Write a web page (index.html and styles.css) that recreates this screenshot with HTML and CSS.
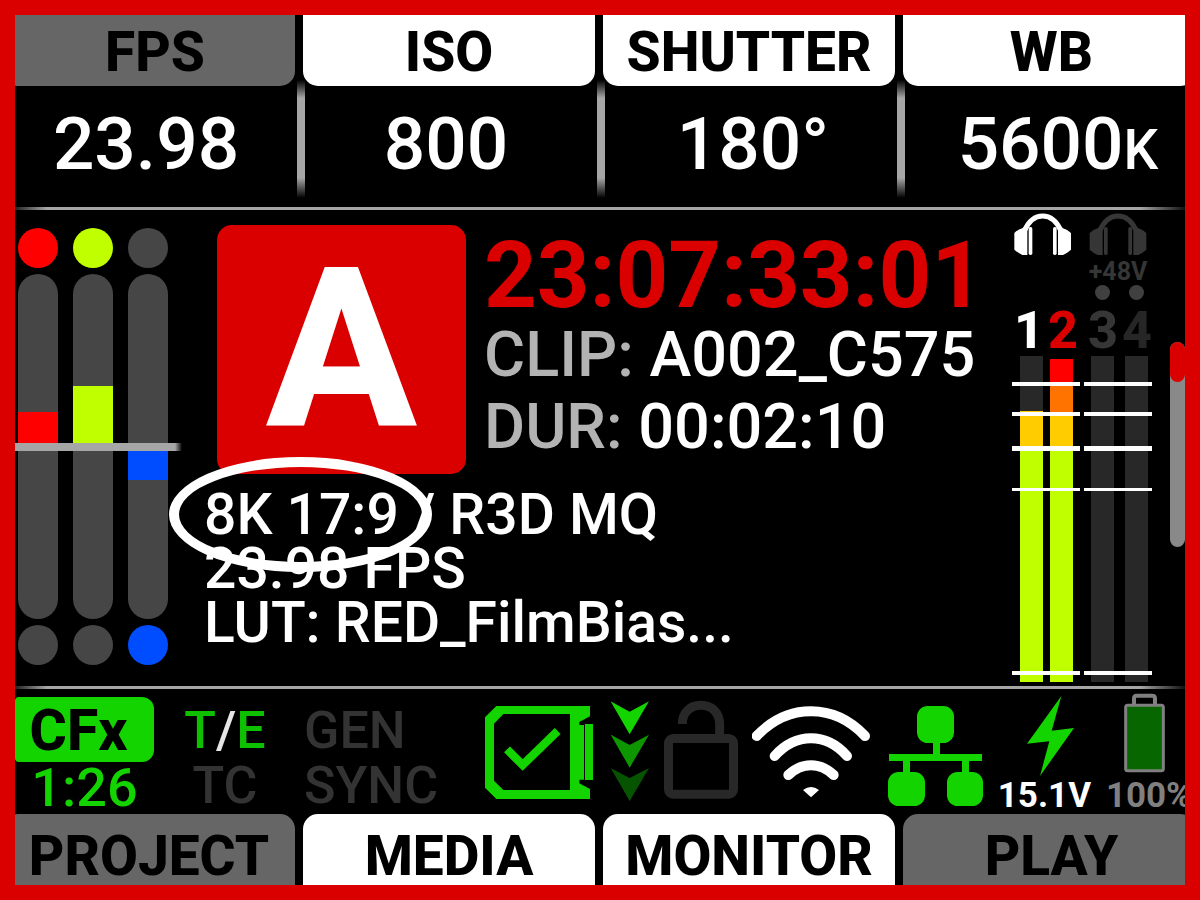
FILE: index.html
```html
<!DOCTYPE html>
<html lang="en">
<head>
<meta charset="utf-8">
<title>Camera status</title>
<link rel="stylesheet" href="styles.css">
</head>
<body>
<main class="screen">
  <nav class="tabs tabs-top">
    <button class="tab tab-off">FPS</button>
    <button class="tab">ISO</button>
    <button class="tab">SHUTTER</button>
    <button class="tab">WB</button>
  </nav>
  <section class="readings">
    <div class="reading">23.98</div>
    <div class="reading">800</div>
    <div class="reading">180°</div>
    <div class="reading">5600<span class="unit">K</span></div>
  </section>
  <hr class="rule">
  <section class="body">
    <div class="exposure">
      <div class="channel"><i class="lamp red"></i><i class="track track-red"></i><i class="lamp"></i></div>
      <div class="channel"><i class="lamp lime"></i><i class="track track-lime"></i><i class="lamp"></i></div>
      <div class="channel"><i class="lamp"></i><i class="track track-blue"></i><i class="lamp blue"></i></div>
      <div class="midline"></div>
    </div>
    <div class="center">
      <div class="clip-row">
        <div class="camera">A</div>
        <div class="clip-info">
          <div class="timecode">23:07:33:01</div>
          <div class="field"><span class="label">CLIP:</span> A002_C575</div>
          <div class="field"><span class="label">DUR:</span> 00:02:10</div>
        </div>
      </div>
      <div class="specs">
        <div>8K 17:9 / R3D MQ</div>
        <div>23.98 FPS</div>
        <div>LUT: RED_FilmBias...</div>
        <div class="ring"></div>
      </div>
    </div>
    <div class="audio">
      <div class="pair pair-on">
        <svg class="phones" viewBox="66 15 204 144">
          <g id="phones">
            <path d="M103 78C116 48 135 33 158 33S200 48 213 78" fill="none" stroke="currentColor" stroke-width="15"/>
            <path d="M112 64V150H97Q84 144 73 134V84Q84 73 97 70L104 64ZM204 64V150H219Q232 144 243 134V84Q232 73 219 70L212 64Z"/>
            <rect x="116" y="66" width="11" height="84" rx="5"/><rect x="189" y="66" width="11" height="84" rx="5"/>
          </g>
        </svg>
        <div class="phantom"></div>
        <div class="numbers"><span>1</span><span class="peak">2</span></div>
        <div class="bars bars-near"><i class="bar level-1"></i><i class="bar level-2"></i>
          <b class="tick t1"></b><b class="tick t2"></b><b class="tick t3"></b><b class="tick t4"></b><b class="tick t5"></b></div>
      </div>
      <div class="pair pair-off">
        <svg class="phones" viewBox="56 15 204 144"><use href="#phones"/></svg>
        <div class="phantom"><span class="volts">+48V</span><span class="dots"><i class="dot"></i><i class="dot"></i></span></div>
        <div class="numbers"><span>3</span><span class="dim">4</span></div>
        <div class="bars bars-far"><i class="bar"></i><i class="bar"></i>
          <b class="tick t1"></b><b class="tick t2"></b><b class="tick t3"></b><b class="tick t4"></b><b class="tick t5"></b></div>
      </div>
    </div>
    <div class="scroll"><div class="thumb"></div></div>
  </section>
  <hr class="rule">
  <section class="status">
    <div class="media">
      <div class="badge">CFx</div>
      <div class="remaining">1:26</div>
    </div>
    <div class="sync">
      <div class="te">T<span class="slash">/</span>E</div><div>GEN</div>
      <div class="tc">TC</div><div>SYNC</div>
    </div>
    <div class="icons">
      <svg width="112" height="125" viewBox="45 27 336 375" fill="#14d400">
        <path fill-rule="evenodd" d="M79 78H360V109L328 126V135H342V299H328V310L360 327V357H79L45 323V112ZM100 102L72 131V302L100 330H300V102Z"/>
        <path d="M345 132H369V300H345Z"/>
        <path d="M111 208L158 255L263 153" fill="none" stroke="#14d400" stroke-width="25"/>
      </svg>
      <svg width="39" height="125" viewBox="423 27 117 375">
        <path fill="#14d400" d="M422 64L479 95L537 64L479 163Z"/>
        <path fill="#0d9600" d="M422 164L479 195L537 164L479 263Z"/>
        <path fill="#065400" d="M422 264L479 294L537 264L479 363Z"/>
      </svg>
      <svg width="74" height="125" viewBox="582 27 222 375" fill="none" stroke="#282828" stroke-width="27">
        <rect x="595.5" y="175.5" width="195" height="167" rx="14"/>
        <path d="M637 132C637 98 660 76 693 76C728 76 749 101 749 132V165"/>
      </svg>
      <svg width="118" height="125" viewBox="36 27 354 375" fill="none" stroke="#fff" stroke-width="30" stroke-linecap="round">
        <path d="M50 168Q121 94 213 94T375 168M104 228Q152 175 213 175T321 228M145 285Q176 256 213 256T281 285"/>
        <path fill="#fff" stroke="none" d="M189 330Q213 312 237 330L213 352Z"/>
      </svg>
      <svg width="99" height="125" viewBox="432 27 297 375" fill="#14d400">
        <rect x="531" y="78" width="111" height="111" rx="32"/>
        <rect x="444" y="276" width="111" height="102" rx="32"/>
        <rect x="621" y="276" width="108" height="102" rx="32"/>
        <path d="M579 185H600V222H726V243H687V280H666V243H510V280H489V243H447V222H579Z"/>
      </svg>
      <div class="power">
        <svg width="95" height="91" viewBox="51 27 285 273"><path fill="#14d400" d="M244 48L141 191L208 184L180 288L282 144L215 152Z"/></svg>
        <div>15.1V</div>
      </div>
      <div class="power battery">
        <svg width="86" height="91" viewBox="378 27 258 273" stroke="#808080">
          <path d="M462 76V55Q462 47 470 47H517Q525 47 525 55V76" fill="none" stroke-width="12"/>
          <rect x="437" y="76" width="113" height="196" rx="6" fill="#086600" stroke-width="9"/>
        </svg>
        <div>100%</div>
      </div>
    </div>
  </section>
  <nav class="tabs tabs-bottom">
    <button class="tab tab-off">PROJECT</button>
    <button class="tab">MEDIA</button>
    <button class="tab">MONITOR</button>
    <button class="tab tab-off">PLAY</button>
  </nav>
</main>
</body>
</html>
```
FILE: styles.css
```css
* { box-sizing: border-box; }
body { margin: 0; background: #000; font-family: Roboto, sans-serif; }
svg { display: block; }

.screen {
  display: flex;
  flex-direction: column;
  min-height: 100vh;
  border: 15px solid #db0000;
  background: #000;
  color: #fff;
  overflow: hidden;
}

.tabs {
  display: grid;
  grid-template-columns: repeat(4, 1fr);
  gap: 8px;
  margin: 0 -10px 0 -12px;
}
.tab {
  height: 71px;
  border: 0;
  padding: 3px 0 0;
  background: #fff;
  color: #000;
  font: 800 55px/68px Roboto, sans-serif;
  text-align: center;
}
.tabs-top .tab { border-radius: 0 0 15px 15px; }
.tabs-top .tab:first-child { padding-left: 12px; }
.tabs .tab:last-child { padding-left: 5px; }
.tabs-bottom .tab { border-radius: 15px 15px 0 0; padding-top: 13px; line-height: 58px; }
.tab.tab-off { background: #666; }

.readings {
  display: grid;
  grid-template-columns: repeat(4, 1fr);
  margin: 0 -18px 0 -12px;
  height: 121px;
  font-size: 73px;
  font-weight: 500;
  line-height: 116px;
}
.reading { position: relative; padding-right: 14px; text-align: center; }
.reading:not(:first-child)::before {
  content: "";
  position: absolute;
  left: -6px;
  top: -6px;
  width: 8px;
  height: 118px;
  background: linear-gradient(transparent, #a6a6a6 18px, #a6a6a6 98px, transparent);
}
.reading:nth-child(3) { padding-right: 0; }
.reading:last-child { padding: 0 0 0 10px; }
.unit { font-size: 55px; }

.rule {
  width: 100%;
  height: 3px;
  margin: 0;
  border: 0;
  background: linear-gradient(90deg, #222, #a6a6a6 32px, #a6a6a6 calc(100% - 45px), #111);
}

.body { flex: 1; display: flex; min-height: 476px; }

.exposure {
  position: relative;
  display: flex;
  gap: 15px;
  margin: 18px 0 21px 3px;
}
.channel { display: flex; flex-direction: column; gap: 6px; }
.lamp { width: 40px; height: 40px; border-radius: 50%; background: #464646; }
.lamp.red { background: #f00; }
.lamp.lime { background: #bfff00; }
.lamp.blue { background: #004dff; }
.track { flex: 1; border-radius: 20px; background: #464646; }
.track-red { background: linear-gradient(#464646 40%, #f00 40% 50%, #464646 50%); }
.track-lime { background: linear-gradient(#464646 32.5%, #bfff00 32.5% 50%, #464646 50%); }
.track-blue { background: linear-gradient(#464646 50%, #004dff 50% 59.7%, #464646 59.7%); }
.midline {
  position: absolute;
  left: -3px;
  right: -14px;
  top: calc(50% - 4px);
  height: 8px;
  background: linear-gradient(90deg, #a6a6a6 calc(100% - 7px), transparent);
}

.center { flex: 1; min-width: 0; margin: 15px 0 0 36px; }
.clip-row { display: flex; gap: 18px; margin-left: 13px; }
.camera {
  width: 249px;
  height: 249px;
  flex: none;
  border-radius: 15px;
  background: #db0000;
  font-size: 223px;
  font-weight: 800;
  line-height: 249px;
  text-align: center;
}
.clip-info { padding-top: 8px; white-space: nowrap; }
.timecode { color: #db0000; font-size: 92px; font-weight: bold; line-height: 86px; }
.field { font-size: 63px; font-weight: 500; line-height: 72px; }
.label { color: #b3b3b3; }
.specs {
  position: relative;
  margin-top: 14px;
  font-size: 57px;
  font-weight: 500;
  line-height: 54px;
}
.ring {
  position: absolute;
  left: -35px;
  top: -31px;
  width: 263px;
  height: 115px;
  border: 10px solid #fff;
  border-radius: 50%;
}

.audio { display: flex; gap: 4px; padding-bottom: 4px; }
.pair { display: flex; flex-direction: column; width: 68px; }
.pair-on { color: #fff; }
.pair-off { color: #363636; }
.phones { width: 68px; height: 48px; fill: currentColor; }
.phantom { display: flex; flex-direction: column; align-items: center; height: 47px; }
.volts { font-size: 25px; font-weight: bold; line-height: 27px; }
.dots { display: grid; grid-template-columns: 34px 34px; justify-items: center; padding-left: 2px; }
.dot { width: 15px; height: 15px; border-radius: 50%; background: #404040; }
.numbers {
  display: grid;
  grid-template-columns: 34px 34px;
  font-size: 52px;
  font-weight: 800;
  line-height: 51px;
  text-align: center;
}
.pair-off .numbers { padding-left: 2px; }
.peak { color: #db0000; }
.dim { color: #262626; }
.bars { position: relative; flex: 1; display: flex; padding: 0 7px; }
.bars-near { gap: 7px; padding-left: 8px; }
.bars-far { gap: 11px; padding-right: 4px; }
.bar { flex: 1; background: #282828; }
.level-1 { background: linear-gradient(#282828 17%, #ffcc00 17% 28%, #bfff00 28%); }
.level-2 { background: linear-gradient(#000 1%, #f00 1% 9%, #ff7300 9% 18%, #ffcc00 18% 28%, #bfff00 28%); }
.tick { position: absolute; left: 0; right: 0; height: 4px; background: #fff; }
.t1 { top: 8%; }
.t2 { top: 17.2%; }
.t3 { top: 27.6%; height: 5px; }
.t4 { top: 40.5%; height: 3px; }
.t5 { top: 96.6%; }

.scroll {
  width: 15px;
  height: 205px;
  margin: 132px 0 0 18px;
  border-radius: 8px;
  background: #898989;
}
.thumb { height: 40px; border-radius: 8px; background: #db0000; }

.status { display: flex; height: 125px; }
.media { width: 139px; padding-top: 8px; text-align: center; }
.badge {
  height: 65px;
  padding-right: 12px;
  border-radius: 4px 12px 12px 4px;
  background: #14d400;
  color: #000;
  font-size: 57px;
  font-weight: 800;
  line-height: 67px;
}
.remaining { color: #14d400; font-size: 54px; font-weight: 500; line-height: 52px; }
.sync {
  display: grid;
  grid-template-columns: 84px auto;
  grid-auto-rows: 55px;
  column-gap: 37px;
  margin-left: 29px;
  padding-top: 14px;
  color: #333;
  font-size: 52px;
  font-weight: 500;
  line-height: 55px;
}
.te { color: #0fc000; text-align: center; }
.tc { text-align: center; }
.slash { color: #e6e6e6; }
.icons { display: flex; gap: 14px; margin: 0 -7px 0 auto; }
.icons > * { flex: none; }
.power { font-size: 35px; font-weight: bold; line-height: 32px; text-align: center; white-space: nowrap; }
.battery { color: #808080; }
```
